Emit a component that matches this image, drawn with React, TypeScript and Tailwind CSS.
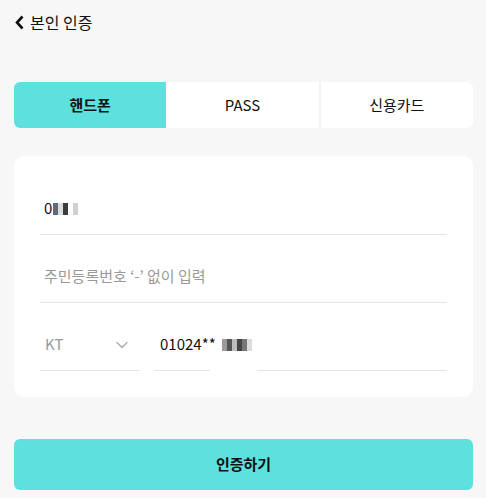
import { ChevronDown } from "lucide-react";

const tabs = ["핸드폰", "PASS", "신용카드"];

const Blur = ({ cells }: { cells: string[] }) => (
    <span className="inline-flex h-[12px] items-stretch">
        {cells.map((c, i) => (
            <span key={i} className={`w-[5px] ${c}`} />
        ))}
    </span>
);

export default function App() {
    return (
        <div className="min-h-[498px] w-full bg-[#f7f7f7] pl-[14px] pr-[13px] font-['Noto_Sans_CJK_KR','Noto_Sans',sans-serif] text-[#111]">
            <div className="flex h-[44px] items-center gap-[6px]">
                <svg width="9" height="15" viewBox="0 0 9 15" className="ml-[1px]">
                    <polyline points="7.5,1.5 2,7.5 7.5,13.5" fill="none" stroke="#111" strokeWidth="2.6" />
                </svg>
                <span className="text-[16px] leading-none">본인 인증</span>
            </div>

            <div className="mt-[38px] flex h-[46px] overflow-hidden rounded-[6px] bg-white">
                {tabs.map((tab, i) => (
                    <div
                        key={tab}
                        className={
                            i === 0
                                ? "flex flex-1 items-center justify-center bg-[#5ee0de] text-[15px] font-bold"
                                : i === 2
                                ? "flex flex-1 items-center justify-center border-l-2 border-[#f3f3f3] text-[15px] font-normal"
                                : "flex flex-1 items-center justify-center text-[15px] font-normal"
                        }
                    >
                        {tab}
                    </div>
                ))}
            </div>

            <div className="mt-[28px] flex flex-col gap-[16px] rounded-[10px] bg-white px-[26px] pt-[27px] pb-[26px]">
                <div className="flex h-[52px] items-center border-b border-[#e5e5e5] pl-[4px] text-[15px]">
                    <span>0</span>
                    <span className="ml-[1px] flex items-center">
                        <Blur cells={["bg-[#5d6d76]", "bg-[#dcdcdc]", "bg-[#3c3c3c]", "bg-white", "bg-[#d0d0d0]"]} />
                    </span>
                </div>

                <div className="flex h-[52px] items-center border-b border-[#e5e5e5] pl-[4px] text-[15px] text-[#999]">
                    주민등록번호 ‘-’ 없이 입력
                </div>

                <div className="flex h-[52px] gap-[14px]">
                    <div className="flex w-[100px] items-center justify-between border-b border-[#e5e5e5] pl-[5px] pr-[8px] text-[15px] text-[#999]">
                        <span>KT</span>
                        <ChevronDown size={20} strokeWidth={1.5} className="text-[#aaa]" />
                    </div>
                    <div className="flex flex-1 gap-[47px]">
                        <div className="flex w-[56px] items-center overflow-visible whitespace-nowrap border-b border-[#e5e5e5] pl-[6px] text-[15px]">
                            <span>01024**</span>
                            <span className="ml-[6px] flex items-center">
                                <Blur cells={["bg-[#9a9a9a]", "bg-[#555]", "bg-[#bdbdbd]", "bg-[#444]", "bg-[#777]", "bg-[#dcdcdc]"]} />
                            </span>
                        </div>
                        <div className="flex-1 border-b border-[#e5e5e5]" />
                    </div>
                </div>
            </div>

            <button className="mt-[42px] flex h-[51px] w-full items-center justify-center rounded-[6px] bg-[#5ee0de] text-[15px] font-bold">
                인증하기
            </button>
        </div>
    );
}
